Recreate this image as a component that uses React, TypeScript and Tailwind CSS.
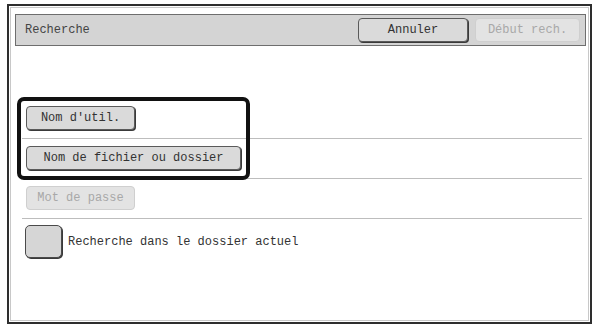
import React from 'react';

const mono = { fontFamily: '"Liberation Mono", "Courier New", monospace' };

const KeyButton = ({ label, width, disabled = false }: { label: string; width: string; disabled?: boolean }) => (
  <div
    className={`${width} h-[24px] flex items-center justify-center rounded-[4px] text-[12px] ${
      disabled
        ? 'bg-[#e3e3e3] border border-[#cfcfcf] text-[#a8a8a8]'
        : 'bg-[#dadada] border border-[#5a5a5a] text-[#333] shadow-[1px_1px_0_#3a3a3a]'
    }`}
  >
    {label}
  </div>
);

const Row = ({ children }: { children: React.ReactNode }) => (
  <div className="pt-[7px] pb-[8px] pl-[4px] border-b border-[#bdbdbd]">{children}</div>
);

export default function App() {
  return (
    <div className="w-[598px] h-[326px] bg-white pt-[4px] pl-[7px]" style={mono}>
      <div className="w-[585px] h-[320px] border-2 border-[#2e2e2e] shadow-[inset_0_0_0_1px_#fff,inset_0_0_0_2px_#c8c8c8] pt-[8px] pl-[6px]">
        {/* header */}
        <div className="w-[571px] h-[32px] bg-[#d4d4d4] border border-[#6e6e6e] flex items-center pl-[9px] pr-[5px]">
          <span className="text-[12px] text-[#444] flex-1">Recherche</span>
          <div className="flex gap-[7px]">
            <KeyButton label="Annuler" width="w-[110px]" />
            <KeyButton label="Début rech." width="w-[105px]" disabled />
          </div>
        </div>

        {/* body */}
        <div className="relative w-[560px] pt-[53px] ml-[7px]">
          <Row>
            <KeyButton label="Nom d'util." width="w-[109px]" />
          </Row>
          <Row>
            <KeyButton label="Nom de fichier ou dossier" width="w-[215px]" />
          </Row>
          <Row>
            <KeyButton label="Mot de passe" width="w-[109px]" disabled />
          </Row>
          <div className="pt-[6px] pl-[3px] flex items-center gap-[6px]">
            <div className="w-[37px] h-[33px] rounded-[5px] bg-[#d6d6d6] border border-[#4a4a4a] shadow-[1px_1px_0_#3a3a3a]" />
            <span className="text-[12px] text-[#333]">Recherche dans le dossier actuel</span>
          </div>

          {/* highlight frame */}
          <div className="absolute left-[-5px] top-[51px] w-[233px] h-[83px] border-[4px] border-[#111] rounded-[7px]" />
        </div>
      </div>
    </div>
  );
}
